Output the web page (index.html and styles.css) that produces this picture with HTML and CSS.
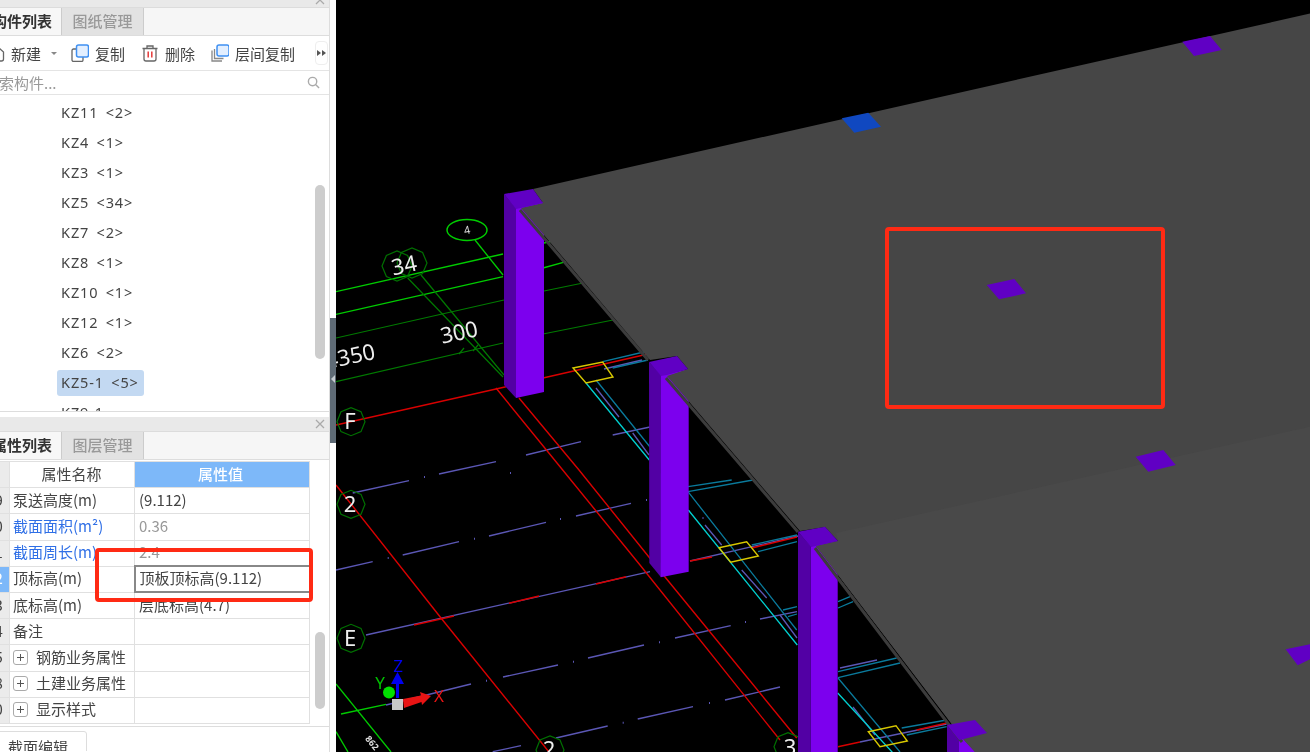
FILE: index.html
```html
<!DOCTYPE html>
<html lang="zh-CN">
<head>
<meta charset="utf-8">
<title>构件列表</title>
<link rel="stylesheet" href="styles.css">
</head>
<body>
<div class="stage">
  <div class="app">
    <aside class="side">
      <section class="pane">
        <div class="bar bar-top"><svg class="close" viewBox="0 0 10 10"><path d="M1 1l8 8M9 1l-8 8"/></svg></div>
        <div class="tabs">
          <div class="tab tab-on">构件列表</div>
          <div class="tab tab-off">图纸管理</div>
        </div>
        <div class="toolbar">
          <span class="tool tool-new">
            <svg class="ico" viewBox="0 0 18 18"><path class="ico-grey" d="M3 4.500h9.500l4 3.500v7a2 2 0 0 1-2 2h-10a2 2 0 0 1-2-2v-9a2 2 0 0 1 .5-1.500zM12 2v5"/></svg>
            新建
          </span>
          <span class="caret"></span>
          <span class="tool tool-copy">
            <svg class="ico" viewBox="0 0 18 18"><rect class="ico-grey" x="1" y="5" width="11" height="12.500" rx="1.500"/><rect class="ico-blue" x="5.500" y="1" width="12" height="12" rx="2"/></svg>
            复制
          </span>
          <span class="tool tool-del">
            <svg class="ico" viewBox="0 0 18 18"><path class="ico-grey" d="M1.500 4.500h15M6 4.500V2h6v2.500M3 4.500V15a2 2 0 0 0 2 2h8a2 2 0 0 0 2-2V4.500"/><path class="ico-red" d="M7.200 7.500v6M10.800 7.500v6"/></svg>
            删除
          </span>
          <span class="tool tool-layer">
            <svg class="ico" viewBox="0 0 18 18"><path class="ico-soft" d="M1 6.500v10.500h10M3.500 5v9.500h9"/><rect class="ico-blue" x="6" y="1" width="12" height="11" rx="2"/></svg>
            层间复制
          </span>
          <span class="more"><i></i><i></i></span>
        </div>
        <div class="search">
          <span class="search-text">搜索构件...</span>
          <svg class="search-ico" viewBox="0 0 14 14"><circle cx="6" cy="6" r="4.500"/><path d="M9.500 9.500L13 13"/></svg>
        </div>
        <div class="list">
          <div class="row"><span class="item">KZ11 &lt;2&gt;</span></div>
          <div class="row"><span class="item">KZ4 &lt;1&gt;</span></div>
          <div class="row"><span class="item">KZ3 &lt;1&gt;</span></div>
          <div class="row"><span class="item">KZ5 &lt;34&gt;</span></div>
          <div class="row"><span class="item">KZ7 &lt;2&gt;</span></div>
          <div class="row"><span class="item">KZ8 &lt;1&gt;</span></div>
          <div class="row"><span class="item">KZ10 &lt;1&gt;</span></div>
          <div class="row"><span class="item">KZ12 &lt;1&gt;</span></div>
          <div class="row"><span class="item">KZ6 &lt;2&gt;</span></div>
          <div class="row"><span class="item item-on">KZ5-1 &lt;5&gt;</span></div>
          <div class="row"><span class="item">KZ9-1</span></div>
          <div class="thumb thumb-list"></div>
        </div>
      </section>
      <section class="pane pane-props">
        <div class="bar bar-props"><svg class="close" viewBox="0 0 10 10"><path d="M1 1l8 8M9 1l-8 8"/></svg></div>
        <div class="tabs">
          <div class="tab tab-on">属性列表</div>
          <div class="tab tab-off">图层管理</div>
        </div>
        <div class="props">
          <table class="grid">
            <thead>
              <tr><th class="num"></th><th class="name-h">属性名称</th><th class="val-h">属性值</th></tr>
            </thead>
            <tbody>
              <tr><td class="num">19</td><td>泵送高度(m)</td><td>(9.112)</td></tr>
              <tr><td class="num">20</td><td class="blue">截面面积(m²)</td><td class="dim">0.36</td></tr>
              <tr><td class="num">21</td><td class="blue">截面周长(m)</td><td class="dim">2.4</td></tr>
              <tr><td class="num num-on">22</td><td>顶标高(m)</td><td class="cell-on">顶板顶标高(9.112)</td></tr>
              <tr><td class="num">23</td><td>底标高(m)</td><td>层底标高(4.7)</td></tr>
              <tr><td class="num">24</td><td>备注</td><td></td></tr>
              <tr><td class="num">25</td><td><span class="plus"></span>钢筋业务属性</td><td></td></tr>
              <tr><td class="num">38</td><td><span class="plus"></span>土建业务属性</td><td></td></tr>
              <tr><td class="num">50</td><td><span class="plus"></span>显示样式</td><td></td></tr>
            </tbody>
          </table>
          <div class="thumb thumb-props"></div>
        </div>
        <div class="foot"><div class="foot-tab">截面编辑</div></div>
      </section>
      <div class="handle"><span class="handle-arrow"></span></div>
    </aside>
    <main class="view">
      <svg class="scene" viewBox="336 0 974 752" width="974" height="752">
        <g class="l-green">
          <path d="M336 291.700L503 254M544 243L590 232"/>
          <path d="M336 314.300L503 276.700M543 268L566 261.700"/>
          <path d="M475 240L503 275"/>
          <path d="M341 714L386 704.300"/>
          <path d="M336 684L391 752"/>
          <path d="M336 731.700L348 752"/>
        </g>
        <g class="l-dgreen">
          <path d="M336 338L504 300M544 291L583 283"/>
          <path d="M336 381.700L503 343M543 334L613 320"/>
          <path d="M407.700 278L503 377"/>
          <path d="M421 275L504 375"/>
          <path d="M464 348l-5 6M478 345l-5 6"/>
        </g>
        <g class="l-purple">
          <path d="M352.700 493L409 480.700M439 474L496 461.700M526 455L581 441.700M612.700 435L650 427"/>
          <path d="M336 570L372.700 561.700M402.700 555L459 541.700M489 536L546 522.300M576 516L631 503.300"/>
          <path d="M366 635L650 571.700M690 561L798 536"/>
          <path d="M386 705L471 684M503 677L558 665M588 658L644 645M675 638L730.700 625.700M760 619L797 611.700"/>
          <path d="M556 738L607.700 726M637.700 719L693 706.700M725 700L780 687"/>
          <path d="M492.700 751.700L521 745.700"/>
          <path d="M596 388L619 417M632.700 433L649 455M705 525L721.700 545M741.700 570L766.700 598M780 615L797 638M853 707L875 735"/>
          <path d="M840 668L877 660M860 742L946.700 724"/>
          <path d="M642 360L604 369"/>
        </g>
        <g class="l-dots">
          <path d="M424 477h1M387.700 558h1M474 538.700h1M560 519h1M646 500h1M486 680.700h1M573 661.700h1M659 642.300h1M622.700 722.700h1M510 473h1M702.500 518h1M745 622h1M709 703h1"/>
        </g>
        <g class="l-teal">
          <path d="M596 380L650 447M688 491.700L796.700 630M688 491.700L753 480M688 486.700L731.700 480"/>
          <path d="M602.700 361.700L648 351M612.700 368L648 360"/>
          <path d="M751.700 545L797 535M758 551.700L797 541.700"/>
          <path d="M783 610L797 606.700M788 616.700L797 614"/>
          <path d="M838 671.700L896.700 658M838 677.700L900 663M838 601.700L850 596.700M838 608L853 601.700"/>
          <path d="M838 678L900 752M901.700 728L946.700 720M906.700 735L946.700 726.700"/>
        </g>
        <g class="l-cyan">
          <path d="M586 383L649.300 460M688.300 510L797.300 645M837.700 693L893 753"/>
        </g>
        <g class="l-red">
          <path d="M336 425L506 386.700M543 378L648 354"/>
          <path d="M496 388L562.700 470L640 565L780 740"/>
          <path d="M519 398L579 470L665 577L796.700 738"/>
          <path d="M336 485L441 618L549 752"/>
          <path d="M414 625L454 616M509 603.300L539 596M596 584L626 576.700"/>
          <path d="M690 561L712 557M752 548L797 537M838 746.700L860 742M916.700 730L946.700 723"/>
        </g>
        <g class="l-yellow">
          <path d="M573 368L602.700 362L613 377L586 383Z"/>
          <path d="M719 547.700L746.700 541.700L758.300 556L730.700 562.300Z"/>
          <path d="M868.300 731.700L896 725.700L907.300 741L880 746.700Z"/>
        </g>
        <g class="oct">
          <polygon points="365,421.700 361,431.600 351,435.700 341,431.600 337,421.700 341,411.800 351,407.700 361,411.800"/>
          <polygon points="365,504.300 361,514.200 351,518.300 341,514.200 337,504.300 341,494.400 351,490.300 361,494.400"/>
          <polygon points="365,638.300 361,648.200 351,652.300 341,648.200 337,638.300 341,628.400 351,624.300 361,628.400"/>
          <polygon points="564,750 560,760 550,764 540,760 536,750 540,740 550,736 560,740"/>
          <polygon points="802,746.700 798,756.600 788,760.700 778,756.600 774,746.700 778,736.800 788,732.700 798,736.800"/>
          <polygon points="412,266 407.600,276.600 397,281 386.400,276.600 382,266 386.400,255.400 397,251 407.600,255.400"/>
          <polygon points="427,263 422.600,273.600 412,278 401.400,273.600 397,263 401.400,252.400 412,248 422.600,252.400"/>
        </g>
        <ellipse class="oval" cx="467" cy="230" rx="20" ry="10.500"/>
        <text class="t-small" x="467" y="234" transform="rotate(-12 467 230)">4</text>
        <text class="t-lab" x="404" y="273" transform="rotate(-12 404 265)">34</text>
        <text class="t-lab" x="459" y="340" transform="rotate(-12 459 332)">300</text>
        <text class="t-lab" x="350" y="364" transform="rotate(-12 350 356)">4350</text>
        <text class="t-lab" x="350" y="429">F</text>
        <text class="t-lab" x="350" y="512">2</text>
        <text class="t-lab" x="350" y="646">E</text>
        <text class="t-lab" x="549" y="757">2</text>
        <text class="t-lab" x="790" y="755">3</text>
        <text class="t-tiny" x="372" y="746" transform="rotate(50 372 743)">862</text>

        <path class="col-left" d="M504 194L516 208V398L504 385Z"/>
        <path class="col-right" d="M516 208L544 202V392L516 398Z"/>
        <path class="col-left" d="M649 362L661 375V577.300L649.300 563Z"/>
        <path class="col-right" d="M661 375L688.700 369V571.700L660.700 577.300Z"/>
        <path class="col-left" d="M798 531.700L810.700 546V752H798Z"/>
        <path class="col-right" d="M810.700 546L837.700 541V752H810.700Z"/>
        <path class="col-left" d="M947 725L959 739V752H947Z"/>
        <path class="col-right" d="M959 739L986 733V752H959Z"/>

        <path class="slab-edge" d="M520 210L648 360M666 378L798 532M815 548L962 742"/>
        <polygon class="slab" points="533,189 1310,13.500 1310,752 975,752 964,740 816,546 838,541 825,527 800,531 667,376 688,369 677,356 650,360 521,208 543,203"/>
        <polygon class="slab-low" points="836,533 1310,426.700 1310,752 975,752 964,740 816,546 838,541"/>

        <polygon class="cap" points="504,194 533,189 543,203 521,208 516,209"/>
        <polygon class="cap" points="649,362 677,356 688,369 667,375 661,376"/>
        <polygon class="cap" points="798,531.700 825,526.700 838,541 816,546 811,547"/>
        <polygon class="cap" points="947,725 975,720 987,733 964,739 959,740"/>
        <polygon class="cap-blue" points="841.700,118.300 868.300,112.700 881,126.700 854.300,132.700"/>
        <polygon class="cap" points="1182.300,41.700 1210,36 1221.700,50 1194,56"/>
        <polygon class="cap" points="986.700,285 1014.300,279 1026,293.300 999,299.300"/>
        <polygon class="cap" points="1135.700,456.700 1163.300,450 1175.700,465 1148.300,471.700"/>
        <polygon class="cap" points="1285.700,649.300 1310,644.300 1310,659.300 1297.700,665.300"/>

        <g class="axis">
          <path class="ax-z" d="M396 698V684h-5l6.500-12 6.500 12h-5v14Z"/>
          <circle class="ax-y" cx="389" cy="692.500" r="6"/>
          <path class="ax-x" d="M403 699L421 695.500L420 692L431 696L422 705L421.500 702L404 708Z"/>
          <rect class="ax-o" x="392" y="699" width="11" height="11"/>
          <text class="t-z" x="398" y="672">Z</text>
          <text class="t-y" x="380" y="689">Y</text>
          <text class="t-x" x="439" y="702">X</text>
        </g>
      </svg>
    </main>
  </div>
  <div class="mark mark-a"></div>
  <div class="mark mark-b"></div>
</div>
</body>
</html>
```
FILE: styles.css
```css
* { box-sizing: border-box; }
html, body { margin: 0; padding: 0; background: #000; }
body {
  font-family: "Noto Sans CJK SC", "Noto Sans", sans-serif;
  font-size: 15px;
  color: #444;
  overflow: hidden;
}
.stage { position: relative; width: 1310px; height: 752px; overflow: hidden; }
.app { display: flex; width: 1310px; height: 752px; filter: blur(.35px); }
.side {
  position: relative;
  flex: 0 0 336px;
  height: 752px;
  padding-right: 6px;
  background: #fff;
  overflow: hidden;
}
.pane { width: 330px; border-right: 1px solid #ddd; }
.pane-props { height: 340px; padding-top: 5px; }
.bar { display: flex; justify-content: flex-end; background: #e9e9e9; border-bottom: 1px solid #dcdcdc; }
.bar-top { height: 8px; overflow: hidden; align-items: flex-end; }
.bar-props { height: 15px; align-items: center; }
.close { width: 10px; height: 10px; margin-right: 4px; flex: none; }
.bar-top .close { margin-bottom: 2px; }
.close path { fill: none; stroke: #aaa; stroke-width: 1.300; }
.tabs { display: flex; height: 28px; background: #f6f6f6; border-bottom: 1px solid #ddd; }
.tab { height: 27px; line-height: 26px; font-size: 15px; font-weight: 500; }
.tab-on { width: 62px; padding-left: 0; text-indent: -8px; white-space: nowrap; overflow: hidden; color: #333; background: #f7f7f7; font-weight: 700; border-right: 1px solid #ccc; }
.tab-off { width: 82px; text-align: center; color: #999; background: #e2e2e2; border-right: 1px solid #ccc; }
.toolbar { display: flex; align-items: center; height: 35px; border-bottom: 1px solid #e4e4e4; white-space: nowrap; }
.tool { display: flex; align-items: center; gap: 6px; flex: none; }
.tool-new { margin-left: -13px; }
.tool-copy { margin-left: 14px; }
.tool-del { margin-left: 16px; }
.tool-layer { margin-left: 16px; }
.ico { width: 18px; height: 18px; flex: none; }
.ico-grey { fill: none; stroke: #666; stroke-width: 1.300; }
.ico-soft { fill: none; stroke: #888; stroke-width: 1.300; }
.ico-blue { fill: #e3efff; stroke: #3f90f2; stroke-width: 1.500; }
.ico-red { fill: none; stroke: #e53a3a; stroke-width: 1.500; }
.caret { width: 0; height: 0; margin-left: 10px; border: 3px solid transparent; border-top: 3px solid #888; border-bottom: 0; }
.more { display: flex; align-items: center; justify-content: center; gap: 1px; width: 13px; height: 24px; margin-left: 20px; border: 1px solid #eee; border-radius: 4px; }
.more i { width: 0; height: 0; border-left: 4px solid #555; border-top: 3px solid transparent; border-bottom: 3px solid transparent; }
.search { display: flex; align-items: center; justify-content: space-between; height: 24px; border-bottom: 1px solid #e4e4e4; overflow: hidden; }
.search-text { margin-left: -16px; color: #999; white-space: nowrap; }
.search-ico { width: 13px; height: 13px; margin-right: 9px; flex: none; }
.search-ico circle, .search-ico path { fill: none; stroke: #aaa; stroke-width: 1.500; }
.list { position: relative; height: 317px; padding-top: 3px; overflow: hidden; border-bottom: 1px solid #ddd; }
.row { display: flex; align-items: center; height: 30px; padding-left: 57px; }
.item { height: 26px; padding: 0 5.500px 0 4px; line-height: 25px; border-radius: 3px; white-space: nowrap; font-family: "Noto Sans", "Noto Sans CJK SC", sans-serif; font-size: 14.500px; letter-spacing: .9px; word-spacing: 2.500px; }
.item-on { background: #c3d9f2; }
.thumb { position: absolute; width: 10px; background: #cdcdcd; border-radius: 5px; }
.thumb-list { left: 315px; top: 90px; height: 174px; }
.thumb-props { left: 315px; top: 172px; height: 77px; }
.props { position: relative; height: 267px; padding-top: 1px; border-bottom: 1px solid #ddd; overflow: hidden; }
.grid { border-collapse: collapse; table-layout: fixed; width: 330px; margin-left: -21px; }
.grid th, .grid td { height: 26.200px; padding: 0 0 2px 3px; border: 1px solid #e0e0e0; white-space: nowrap; overflow: hidden; font-weight: 400; font-size: 15px; line-height: 20px; }
.grid th:nth-child(1), .grid td:nth-child(1) { width: 30px; }
.grid th:nth-child(2), .grid td:nth-child(2) { width: 125px; }
.grid th:nth-child(3), .grid td:nth-child(3) { width: 175px; padding-left: 4px; }
.grid .num { padding: 0 0 2px; text-align: center; background: #ebebeb; }
.grid .num-on { background: #7db8f9; color: #fff; }
.grid .name-h { padding-right: 4px; text-align: center; background: #fff; }
.grid .val-h { padding-right: 7px; text-align: center; background: #7db8f9; color: #fff; font-weight: 500; }
.grid .blue { color: #2f6fe6; }
.grid .dim { color: #999; }
.grid .cell-on { border: 2px solid #888; }
.plus { display: inline-block; position: relative; width: 15px; height: 15px; margin-right: 8px; border: 1px solid #aaa; border-radius: 3px; vertical-align: -2px; }
.plus::before, .plus::after { content: ""; position: absolute; background: #555; }
.plus::before { left: 3px; top: 6px; width: 7px; height: 1px; }
.plus::after { left: 6px; top: 3px; width: 1px; height: 7px; }
.foot { height: 24px; padding-top: 4px; overflow: hidden; }
.foot-tab { width: 88px; height: 30px; padding: 5px 0 0 8px; line-height: 20px; margin-left: -1px; border: 1px solid #ddd; border-radius: 0 3px 0 0; }
.handle { position: absolute; left: 330px; top: 318px; width: 6px; height: 125px; background: #5f6b76; }
.handle-arrow { position: absolute; left: 1px; top: 57px; width: 0; height: 0; border-right: 4px solid #c5cbd0; border-top: 4px solid transparent; border-bottom: 4px solid transparent; }
.view { flex: 0 0 974px; height: 752px; background: #000; }
.scene { display: block; }
.scene path, .scene ellipse { fill: none; }
.l-green path { stroke: #00cc00; stroke-width: 1.300; }
.l-dgreen path { stroke: #007a00; stroke-width: 1.200; }
.l-purple path { stroke: #5b57b5; stroke-width: 1.300; }
.l-dots path { stroke: #5b57b5; stroke-width: 2; }
.l-teal path { stroke: #0a7a9c; stroke-width: 1.300; }
.l-cyan path { stroke: #00d0d0; stroke-width: 1.300; }
.l-red path { stroke: #d80000; stroke-width: 1.400; }
.l-yellow path { stroke: #d8c800; stroke-width: 1.400; }
.oct polygon { fill: none; stroke: #007000; stroke-width: 1.200; }
.oval { stroke: #00cc00; stroke-width: 1.500; }
.scene .col-left { fill: #5200a4; }
.scene .col-right { fill: #7c00ee; }
.slab { fill: #464646; }
.slab-low { fill: #494949; }
.scene .slab-edge { stroke: #3c3c3c; stroke-width: 3; }
.cap { fill: #6000c4; }
.cap-blue { fill: #1048c0; }
.t-lab { fill: #eee; font-family: "Noto Sans", sans-serif; font-size: 22px; text-anchor: middle; }
.t-small { fill: #ddd; font-family: "Noto Sans", sans-serif; font-size: 11px; text-anchor: middle; }
.t-tiny { fill: #ddd; font-family: "Noto Sans", sans-serif; font-size: 9px; font-weight: 700; text-anchor: middle; }
.scene .ax-z { fill: #0000f0; }
.ax-y { fill: #00e000; }
.scene .ax-x { fill: #e81414; }
.ax-o { fill: #c8c8c8; }
.t-z, .t-y, .t-x { font-family: "Noto Sans", sans-serif; font-size: 17px; text-anchor: middle; }
.t-z { fill: #0000f0; }
.t-y { fill: #00c000; }
.t-x { fill: #e81414; }
.mark { position: absolute; border: 4px solid #ff2a14; border-radius: 4px; }
.mark-a { left: 885px; top: 227px; width: 280px; height: 182px; }
.mark-b { left: 95px; top: 548px; width: 218px; height: 54px; }
```
